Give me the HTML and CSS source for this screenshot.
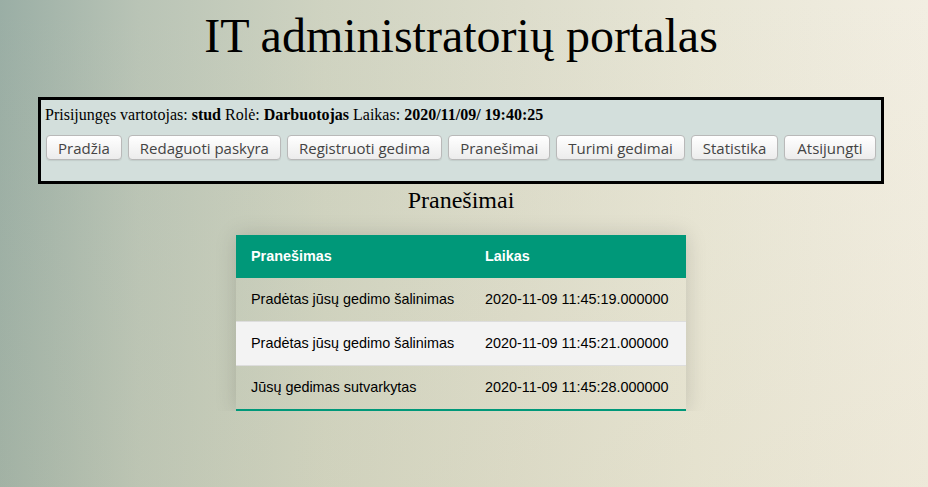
FILE: index.html
```html
<!DOCTYPE html>
<html lang="lt">
<head>
<meta charset="utf-8">
<title>IT administratorių portalas</title>
<link rel="stylesheet" href="styles.css">
</head>
<body>
<h1 class="title">IT administratorių portalas</h1>
<div class="panel">
  <p class="info">Prisijungęs vartotojas: <b>stud</b> Rolė: <b>Darbuotojas</b> Laikas: <b>2020/11/09/ 19:40:25</b></p>
  <div class="nav">
    <button class="btn">Pradžia</button>
    <button class="btn">Redaguoti paskyra</button>
    <button class="btn">Registruoti gedima</button>
    <button class="btn">Pranešimai</button>
    <button class="btn">Turimi gedimai</button>
    <button class="btn">Statistika</button>
    <button class="btn">Atsijungti</button>
  </div>
</div>
<h2 class="subtitle">Pranešimai</h2>
<table class="styled-table">
  <thead>
    <tr><th>Pranešimas</th><th>Laikas</th></tr>
  </thead>
  <tbody>
    <tr><td>Pradėtas jūsų gedimo šalinimas</td><td>2020-11-09 11:45:19.000000</td></tr>
    <tr><td>Pradėtas jūsų gedimo šalinimas</td><td>2020-11-09 11:45:21.000000</td></tr>
    <tr><td>Jūsų gedimas sutvarkytas</td><td>2020-11-09 11:45:28.000000</td></tr>
  </tbody>
</table>
</body>
</html>
```
FILE: styles.css
```css
html {
  min-height: 100%;
  background:
    linear-gradient(180deg, rgba(255,255,255,0) 0%, rgba(210,200,160,0.14) 100%),
    linear-gradient(90deg, #9aaea5 0%, #b9c4b6 15%, #cfd3c1 35%, #dcdccb 55%, #e8e6d6 75%, #f2eee2 100%);
}
body {
  margin: 0 14px 0 8px;
  font-family: "Liberation Serif", "Times New Roman", serif;
  color: #000;
}
.title {
  margin: 0;
  padding-top: 8px;
  text-align: center;
  font-weight: normal;
  font-size: 48px;
  line-height: 55px;
}
.panel {
  width: 832px;
  margin: 34px auto 0;
  border: 3px solid #000;
  background: #d3dfdc;
  padding: 5px 4px 21px 4px;
}
.info {
  margin: 0 0 11px 0;
  font-size: 16px;
  line-height: 19px;
}
.nav {
  display: flex;
  gap: 6px;
  padding-left: 1px;
}
.btn {
  font-family: "Open Sans", "DejaVu Sans", sans-serif;
  font-size: 15px;
  color: #444;
  height: 25px;
  padding: 0 11px;
  border: 1px solid #b9b9b9;
  border-radius: 4px;
  background: linear-gradient(#ffffff, #ececec);
  box-shadow: 0 1px 1px rgba(0,0,0,0.08);
}
.btn:last-child {
  padding: 0 12px;
}
.subtitle {
  margin: 2px 0 0;
  text-align: center;
  font-weight: normal;
  font-size: 24px;
  line-height: 28px;
}
.styled-table {
  border-collapse: collapse;
  margin: 21px auto 0;
  width: 450px;
  font-family: "Liberation Sans", Arial, sans-serif;
  font-size: 14.4px;
  box-shadow: 0 0 20px rgba(0,0,0,0.15);
}
.styled-table thead tr {
  background: #009879;
  color: #fff;
  text-align: left;
}
.styled-table th,
.styled-table td {
  padding: 12px 15px;
  line-height: 19px;
}
.styled-table th:first-child,
.styled-table td:first-child {
  width: 204px;
}
.styled-table tbody tr {
  border-bottom: 1px solid #dddddd;
}
.styled-table tbody tr:nth-of-type(even) {
  background: #f3f3f3;
}
.styled-table tbody tr:last-of-type {
  border-bottom: 2px solid #009879;
}
```
